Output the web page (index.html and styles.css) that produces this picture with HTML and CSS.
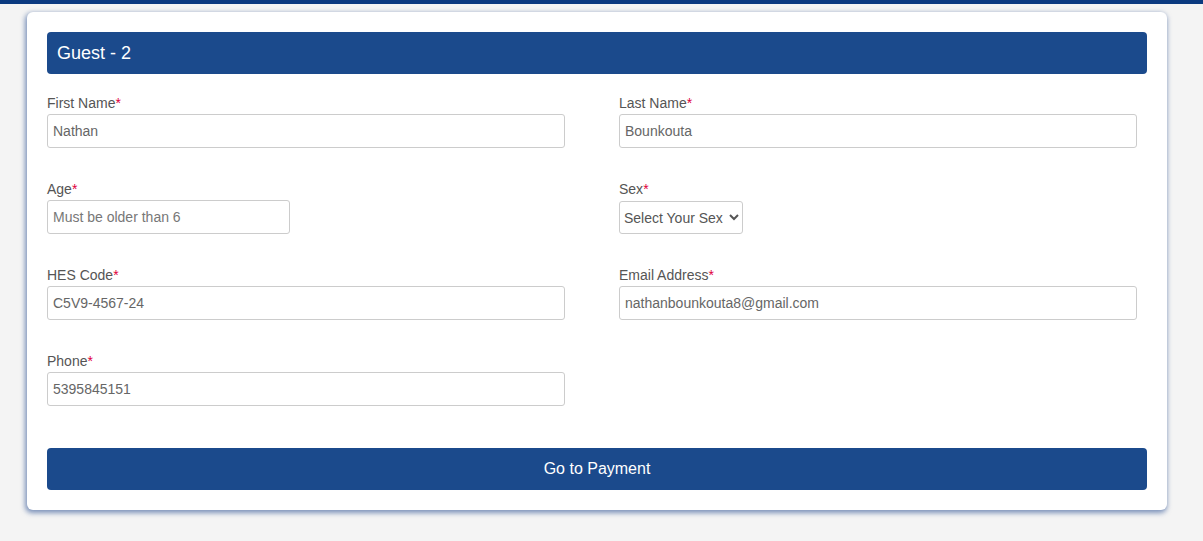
FILE: index.html
```html
<!DOCTYPE html>
<html>
<head>
<meta charset="utf-8">
<link rel="stylesheet" href="styles.css">
</head>
<body>
<div class="topbar"></div>
<main class="page">
  <section class="card">
    <h2 class="card-title">Guest - 2</h2>
    <form class="form-grid">
      <div class="field">
        <label class="label">First Name<span class="req">*</span></label>
        <input class="input" type="text" value="Nathan">
      </div>
      <div class="field">
        <label class="label">Last Name<span class="req">*</span></label>
        <input class="input" type="text" value="Bounkouta">
      </div>
      <div class="field">
        <label class="label">Age<span class="req">*</span></label>
        <input class="input input-short" type="text" placeholder="Must be older than 6">
      </div>
      <div class="field">
        <label class="label">Sex<span class="req">*</span></label>
        <select class="select">
          <option>Select Your Sex</option>
          <option>Male</option>
          <option>Female</option>
        </select>
      </div>
      <div class="field">
        <label class="label">HES Code<span class="req">*</span></label>
        <input class="input" type="text" value="C5V9-4567-24">
      </div>
      <div class="field">
        <label class="label">Email Address<span class="req">*</span></label>
        <input class="input" type="text" value="nathanbounkouta8@gmail.com">
      </div>
      <div class="field">
        <label class="label">Phone<span class="req">*</span></label>
        <input class="input" type="text" value="5395845151">
      </div>
    </form>
    <button class="btn" type="button">Go to Payment</button>
  </section>
</main>
</body>
</html>
```
FILE: styles.css
```css
* { box-sizing: border-box; }
html, body {
  margin: 0;
  padding: 0;
  background: #f4f4f4;
  font-family: "Liberation Sans", Arial, sans-serif;
}
body { min-height: 541px; }
.topbar {
  height: 4px;
  background: #0b3a80;
}
.page {
  padding: 8px 36px 0 27px;
}
.card {
  width: 1140px;
  background: #fff;
  border-radius: 6px;
  box-shadow: -1px 2px 5px 1px rgba(30, 70, 140, 0.55);
  padding: 20px 20px 20px 20px;
}
.card-title {
  margin: 0 0 20px 0;
  height: 42px;
  line-height: 42px;
  background: #1b4a8c;
  color: #fff;
  font-size: 18px;
  font-weight: normal;
  padding: 0 10px;
  border-radius: 4px;
}
.form-grid {
  display: grid;
  grid-template-columns: 518px 518px;
  column-gap: 54px;
  row-gap: 32px;
  margin: 0;
}
.field {
  display: flex;
  flex-direction: column;
  align-items: flex-start;
}
.label {
  font-size: 14px;
  line-height: 18px;
  margin-bottom: 2px;
  color: #555;
}
.req { color: #e0003c; }
.input {
  width: 518px;
  height: 34px;
  border: 1px solid #ccc;
  border-radius: 3px;
  padding: 0 5px;
  font-family: "Liberation Sans", Arial, sans-serif;
  font-size: 14px;
  color: #666;
  background: #fff;
  outline: none;
}
.input::placeholder { color: #777; opacity: 1; }
.input-short { width: 243px; }
.select {
  margin-top: 1px;
  width: 124px;
  height: 33px;
  border: 1px solid #ccc;
  border-radius: 3px;
  font-family: "Liberation Sans", Arial, sans-serif;
  font-size: 14px;
  color: #555;
  background: #fff;
  padding: 0;
}
.btn {
  display: block;
  width: 100%;
  margin-top: 42px;
  height: 42px;
  border: none;
  border-radius: 4px;
  background: #1b4a8c;
  color: #fff;
  font-family: "Liberation Sans", Arial, sans-serif;
  font-size: 16px;
}
```
